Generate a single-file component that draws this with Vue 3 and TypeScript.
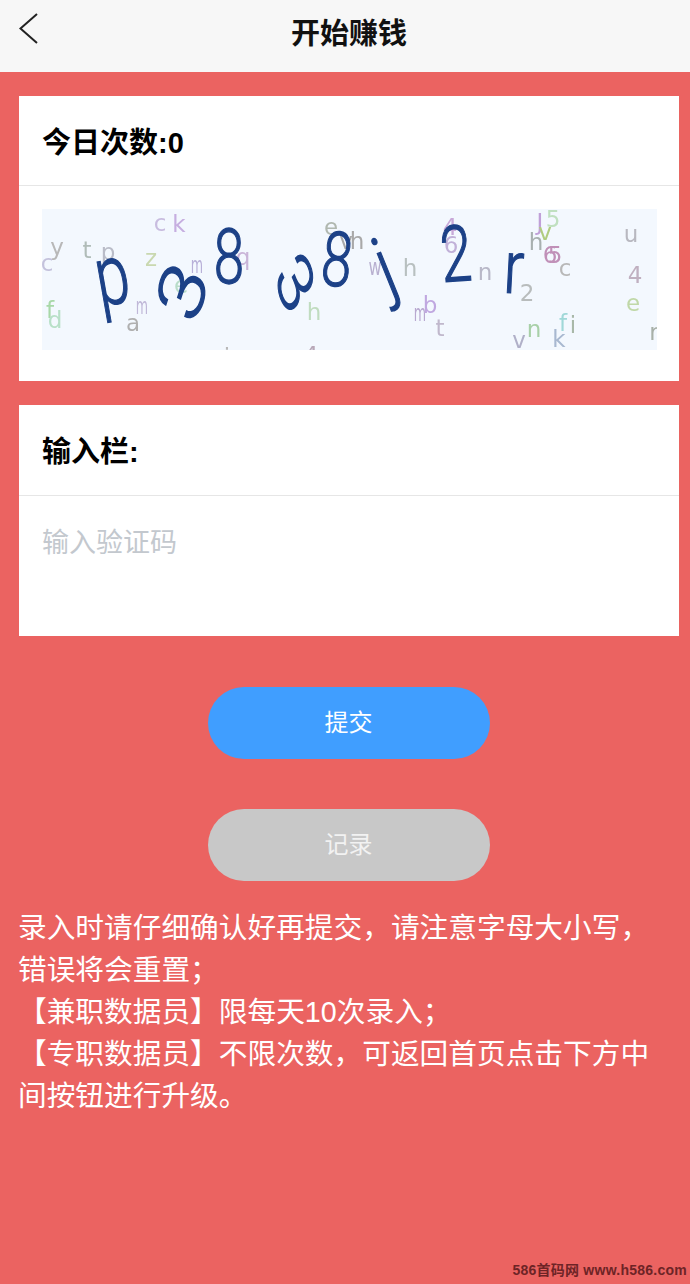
<script setup lang="ts">
interface Glyph {
  t: string
  x: number
  y: number
  c?: string
  s?: number
  r?: number
  sx?: number
  sk?: number
}

const ORIGIN_X = 42
const ORIGIN_Y = 209
const INK = '#1c4187'

const glyphs: Glyph[] = [
  { t: 'c', x: 47, y: 263, c: '#c4c2dc' },
  { t: 'y', x: 57, y: 247, c: '#b8b8b8' },
  { t: 't', x: 87, y: 250, c: '#b0bcb8' },
  { t: 'p', x: 108, y: 252, c: '#b9bcc8' },
  { t: 'z', x: 151, y: 258, c: '#c9d8b0' },
  { t: 'c', x: 160, y: 223, c: '#c8bcdf' },
  { t: 'k', x: 179, y: 224, c: '#c6aee0' },
  { t: 'm', x: 197, y: 265, c: '#b8b0d8', sx: 0.55 },
  { t: 'q', x: 243, y: 257, c: '#c9b4d8' },
  { t: 'e', x: 331, y: 227, c: '#b0b8b0' },
  { t: 'v', x: 346, y: 241, c: '#a8a8a8' },
  { t: 'h', x: 357, y: 241, c: '#a8a8a8' },
  { t: 'f', x: 50, y: 310, c: '#a8d8a8' },
  { t: 'd', x: 55, y: 320, c: '#b8e0c8' },
  { t: 'a', x: 133, y: 323, c: '#b0b0b0' },
  { t: 'm', x: 142, y: 306, c: '#c0b8d8', sx: 0.55 },
  { t: 'e', x: 181, y: 285, c: '#b8dcc8' },
  { t: 'h', x: 314, y: 312, c: '#c0dcc0' },
  { t: '4', x: 311, y: 355, c: '#b8a8b8' },
  { t: 'i', x: 227, y: 357, c: '#b8b8b8' },
  { t: 'w', x: 375, y: 267, c: '#b8b0d0', sx: 0.7 },
  { t: 'h', x: 410, y: 268, c: '#b8c0c0' },
  { t: 'm', x: 420, y: 313, c: '#b8a8d0', sx: 0.55 },
  { t: 'b', x: 430, y: 305, c: '#c0a8e0' },
  { t: 't', x: 440, y: 328, c: '#c0b8cc' },
  { t: '4', x: 450, y: 227, c: '#c8a8d8' },
  { t: '6', x: 451, y: 245, c: '#c0b0d8' },
  { t: 'n', x: 485, y: 272, c: '#b8b8c8' },
  { t: '2', x: 527, y: 293, c: '#b8bcbc' },
  { t: 'J', x: 540, y: 222, c: '#c0a0d8' },
  { t: '5', x: 553, y: 219, c: '#c0e0c0' },
  { t: 'v', x: 545, y: 232, c: '#b0cc80' },
  { t: 'h', x: 536, y: 242, c: '#a8b0b0' },
  { t: '6', x: 550, y: 255, c: '#c090b8' },
  { t: '5', x: 555, y: 255, c: '#c090b8' },
  { t: 'c', x: 565, y: 268, c: '#b8b8b8' },
  { t: 'u', x: 631, y: 234, c: '#b8b8c0' },
  { t: '4', x: 635, y: 275, c: '#c0b0c0' },
  { t: 'e', x: 633, y: 303, c: '#c0d8a8' },
  { t: 'f', x: 563, y: 323, c: '#a0d8d8' },
  { t: 'i', x: 573, y: 325, c: '#a8b8a8' },
  { t: 'k', x: 559, y: 339, c: '#a8b8d0' },
  { t: 'n', x: 534, y: 329, c: '#a8d0a8' },
  { t: 'v', x: 519, y: 340, c: '#b0b0c8' },
  { t: 'r', x: 654, y: 332, c: '#a8b0a8' },
  { t: 'u', x: 473, y: 358, c: '#b8b8b8' },
  { t: 'p', x: 112, y: 276, c: INK, s: 84, r: -10, sx: 0.72 },
  { t: '3', x: 183, y: 292, c: INK, s: 66, r: -62, sx: 1.35, sk: -10 },
  { t: '8', x: 229, y: 257, c: INK, s: 76, sx: 0.72 },
  { t: '3', x: 295, y: 283, c: INK, s: 62, r: 40, sx: 1.15, sk: 27 },
  { t: '8', x: 337, y: 260, c: INK, s: 76, r: 6, sx: 0.72 },
  { t: 'j', x: 385, y: 267, c: INK, s: 80, r: -22, sx: 0.8 },
  { t: '2', x: 456, y: 255, c: INK, s: 78, r: -4, sx: 0.72 },
  { t: 'r', x: 514, y: 268, c: INK, s: 74, r: 3, sx: 0.8 },
]

function glyphStyle(g: Glyph) {
  return {
    left: `${g.x - ORIGIN_X}px`,
    top: `${g.y - ORIGIN_Y}px`,
    color: g.c,
    fontSize: `${g.s ?? 23}px`,
    transform: `translate(-50%, -50%) rotate(${g.r ?? 0}deg) skewY(${g.sk ?? 0}deg) scaleX(${g.sx ?? 1})`,
  }
}
</script>

<template>
  <div class="page">
    <header class="nav">
      <svg class="back" width="22" height="32" viewBox="0 0 22 32" fill="none">
        <path d="M20 1 L3.5 15.5 L20 30" stroke="#222" stroke-width="2" />
      </svg>
      <h1 class="nav-title">开始赚钱</h1>
    </header>

    <main class="content">
      <section class="card">
        <div class="card-head head-count">今日次数:0</div>
        <div class="captcha-wrap">
          <div class="captcha">
            <span
              v-for="(g, i) in glyphs"
              :key="i"
              class="glyph"
              :class="{ big: g.s }"
              :style="glyphStyle(g)"
            >{{ g.t }}</span>
          </div>
        </div>
      </section>

      <section class="card">
        <div class="card-head head-input">输入栏:</div>
        <div class="input-wrap">
          <input class="code-input" type="text" placeholder="输入验证码" />
        </div>
      </section>

      <div class="actions">
        <button class="btn primary" type="button">提交</button>
        <button class="btn muted" type="button">记录</button>
      </div>

      <p class="notes">
        录入时请仔细确认好再提交，请注意字母大小写，错误将会重置；<br />
        【兼职数据员】限每天10次录入；<br />
        【专职数据员】不限次数，可返回首页点击下方中间按钮进行升级。
      </p>
    </main>

    <div class="watermark">586首码网 www.h586.com</div>
  </div>
</template>

<style>
html,
body {
  margin: 0;
  padding: 0;
  background: #eb6361;
}
</style>

<style scoped>
.page {
  position: relative;
  width: 690px;
  height: 1284px;
  overflow: hidden;
  display: flex;
  flex-direction: column;
  background: #eb6361;
  font-family: "Liberation Sans", "Noto Sans CJK SC", sans-serif;
}

.nav {
  position: relative;
  flex: none;
  height: 72px;
  padding-left: 8px;
  box-sizing: border-box;
  display: flex;
  align-items: center;
  justify-content: center;
  background: #f7f7f7;
}

.back {
  position: absolute;
  left: 17px;
  top: 13px;
}

.nav-title {
  margin: 0 0 10px;
  font-size: 29px;
  font-weight: 700;
  color: #111;
}

.content {
  display: flex;
  flex-direction: column;
  gap: 24px;
  padding: 24px 11px 0 19px;
}

.card {
  background: #fff;
}

.card-head {
  box-sizing: border-box;
  display: flex;
  align-items: center;
  padding-left: 23px;
  font-size: 29px;
  font-weight: 700;
  color: #000;
  border-bottom: 1px solid #e6e6e6;
}

.head-count {
  height: 90px;
  padding-bottom: 2px;
}

.head-input {
  height: 91px;
  padding-bottom: 2px;
}

.captcha-wrap {
  padding: 23px 23px 31px;
}

.captcha {
  position: relative;
  width: 615px;
  height: 141px;
  overflow: hidden;
  background: #f3f8fe;
  filter: blur(0.4px);
}

.glyph {
  position: absolute;
  font-family: "DejaVu Sans", sans-serif;
  line-height: 1;
}

.glyph.big {
  font-family: Roboto, "Liberation Sans", sans-serif;
  font-weight: 300;
  -webkit-text-stroke: 1.3px #1c4187;
}

.input-wrap {
  height: 140px;
  padding: 26px 23px 0;
  box-sizing: border-box;
}

.code-input {
  width: 100%;
  height: 42px;
  padding: 0;
  border: 0;
  outline: 0;
  background: transparent;
  font-family: inherit;
  font-size: 27px;
  color: #333;
}

.code-input::placeholder {
  color: #c3c8ce;
  opacity: 1;
}

.actions {
  display: flex;
  flex-direction: column;
  align-items: center;
  gap: 50px;
  margin-top: 27px;
  padding-right: 1px;
}

.btn {
  width: 282px;
  height: 72px;
  padding: 0 0 6px;
  border: 0;
  border-radius: 36px;
  font-family: inherit;
  font-size: 24px;
  color: #fff;
}

.primary {
  background: #409eff;
}

.muted {
  background: #c8c8c8;
  color: #f2f2f2;
}

.notes {
  max-width: 648px;
  margin: 2px 0 0 -1px;
  font-size: 28.7px;
  line-height: 42px;
  color: #fff;
}

.watermark {
  position: absolute;
  right: 3px;
  top: 1259px;
  font-size: 14px;
  font-weight: 700;
  letter-spacing: 0.25px;
  color: #6d2426;
  white-space: nowrap;
}
</style>
